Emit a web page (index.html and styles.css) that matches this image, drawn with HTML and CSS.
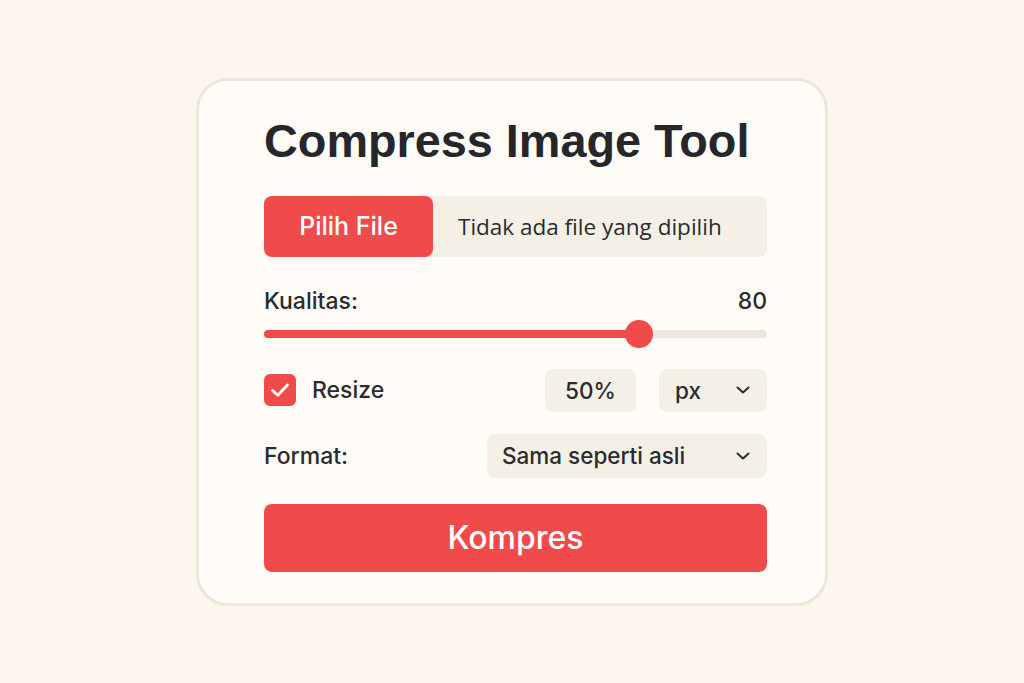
FILE: index.html
```html
<!DOCTYPE html>
<html>
<head>
<meta charset="utf-8">
<link rel="stylesheet" href="styles.css">
</head>
<body>
<div class="card">
  <h1 class="title">Compress Image Tool</h1>
  <div class="file-row">
    <div class="file-btn">Pilih File</div>
    <div class="file-name">Tidak ada file yang dipilih</div>
  </div>
  <div class="quality-row">
    <span>Kualitas:</span>
    <span class="value">80</span>
  </div>
  <div class="slider">
    <div class="track"></div>
    <div class="fill" style="width: 74.5%"></div>
    <div class="thumb" style="left: 74.5%"></div>
  </div>
  <div class="resize-row">
    <div class="check">
      <svg width="24" height="24" viewBox="0 0 24 24"><path d="M4.5 12.5 L9.8 17.3 L19.5 7" fill="none" stroke="#fff" stroke-width="2.8" stroke-linecap="round" stroke-linejoin="round"/></svg>
    </div>
    <span class="resize-label">Resize</span>
    <div class="spacer"></div>
    <div class="field pct">50%</div>
    <div class="field unit">
      <span>px</span>
      <svg class="chev" width="16" height="10" viewBox="0 0 16 10"><path d="M2.5 2.5 L8 7.5 L13.5 2.5" fill="none" stroke="#2a2b2e" stroke-width="2" stroke-linecap="round" stroke-linejoin="round"/></svg>
    </div>
  </div>
  <div class="format-row">
    <span>Format:</span>
    <div class="field format">
      <span>Sama seperti asli</span>
      <svg class="chev" width="16" height="10" viewBox="0 0 16 10"><path d="M2.5 2.5 L8 7.5 L13.5 2.5" fill="none" stroke="#2a2b2e" stroke-width="2" stroke-linecap="round" stroke-linejoin="round"/></svg>
    </div>
  </div>
  <div class="submit">Kompres</div>
</div>
</body>
</html>
```
FILE: styles.css
```css
html, body {
  margin: 0;
  padding: 0;
}
body {
  background: #fdf6ec;
  height: 100vh;
  display: flex;
  align-items: center;
  justify-content: center;
  font-family: "Inter", "Liberation Sans", sans-serif;
  color: #2a2b2e;
}
.card {
  box-sizing: border-box;
  width: 632px;
  height: 528px;
  border: 3px solid #ede6da;
  border-radius: 32px;
  background: #fffcf7;
  padding: 32px 58px 31px 65px;
  display: flex;
  flex-direction: column;
}
.title {
  margin: 0;
  font-family: "Liberation Sans", sans-serif;
  font-weight: 700;
  font-size: 46.8px;
  line-height: 56px;
  color: #25272b;
}
.file-row {
  margin-top: 27px;
  height: 61px;
  display: flex;
  background: #f5f0e6;
  border-radius: 8px;
}
.file-btn {
  width: 169px;
  background: #f04b4b;
  border-radius: 8px;
  color: #fff;
  font-size: 25px;
  font-weight: 500;
  display: flex;
  align-items: center;
  justify-content: center;
}
.file-name {
  padding-left: 25px;
  display: flex;
  align-items: center;
  font-family: "Open Sans", sans-serif;
  font-size: 22.5px;
  color: #2a2b2e;
}
.quality-row {
  margin-top: 32px;
  display: flex;
  justify-content: space-between;
  font-size: 23px;
  font-weight: 500;
  line-height: 24px;
}
.value {
  font-weight: 500;
}
.slider {
  position: relative;
  margin-top: 7px;
  height: 28px;
}
.track {
  position: absolute;
  left: 0;
  right: 0;
  top: 10px;
  height: 8px;
  border-radius: 4px;
  background: #ece6dc;
}
.fill {
  position: absolute;
  left: 0;
  top: 10px;
  height: 8px;
  border-radius: 4px;
  background: #f04b4b;
}
.thumb {
  position: absolute;
  top: 0;
  width: 28px;
  height: 28px;
  margin-left: -14px;
  border-radius: 50%;
  background: #f04b4b;
}
.resize-row {
  margin-top: 21px;
  height: 43px;
  display: flex;
  align-items: center;
}
.check {
  width: 32px;
  height: 32px;
  border-radius: 6px;
  background: #f04b4b;
  display: flex;
  align-items: center;
  justify-content: center;
}
.resize-label {
  margin-left: 16px;
  font-size: 23px;
  font-weight: 500;
}
.spacer {
  flex: 1;
}
.field {
  box-sizing: border-box;
  height: 43px;
  background: #f5f0e6;
  border-radius: 8px;
  display: flex;
  align-items: center;
  font-size: 22.5px;
  font-weight: 500;
}
.pct {
  width: 91px;
  justify-content: center;
}
.unit {
  width: 108px;
  margin-left: 23px;
  padding: 0 16px 0 16px;
  justify-content: space-between;
}
.format-row {
  margin-top: 22px;
  display: flex;
  align-items: center;
  justify-content: space-between;
  font-size: 23px;
  font-weight: 500;
}
.format {
  width: 280px;
  height: 44px;
  padding: 0 16px 0 15px;
  justify-content: space-between;
}
.submit {
  margin-top: 26px;
  height: 68px;
  border-radius: 8px;
  background: #f04b4b;
  color: #fff;
  font-size: 32px;
  font-weight: 500;
  display: flex;
  align-items: center;
  justify-content: center;
}
```
